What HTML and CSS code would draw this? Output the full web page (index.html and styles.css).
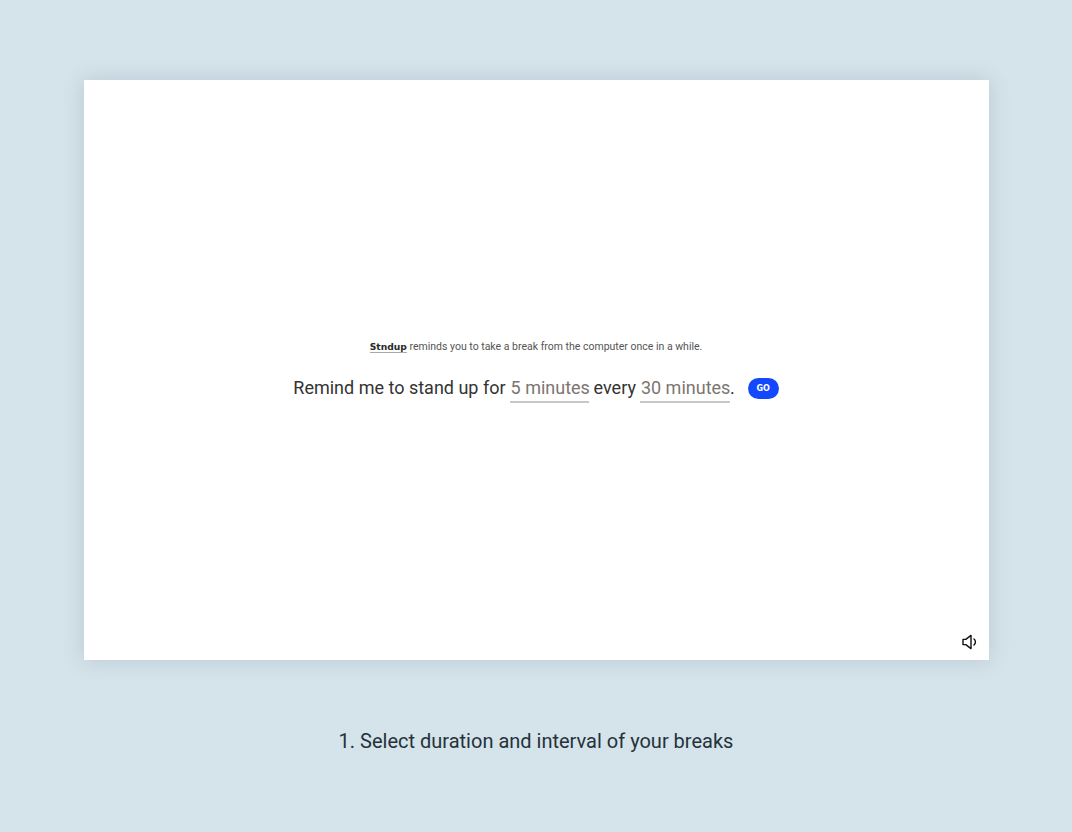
FILE: index.html
```html
<!DOCTYPE html>
<html lang="en">
<head>
    <meta charset="UTF-8">
    <meta name="viewport" content="width=device-width, initial-scale=1.0">
    <title>Stndup</title>
    <link rel="stylesheet" href="styles.css">
</head>
<body>
    <div class="screen">
        <div class="intro">
            <p class="tagline"><span class="brand">Stndup</span> reminds you to take a break from the computer once in a while.</p>
            <div class="sentence">
                <span>Remind me to stand up for</span>
                <span class="field field-duration">5 minutes</span>
                <span class="word">every</span>
                <span class="field field-interval">30 minutes</span><span class="dot">.</span>
                <button class="go" type="button">GO</button>
            </div>
        </div>
        <div class="sound">
            <svg width="16" height="16" viewBox="0 0 16 16" fill="none" stroke="#111" stroke-width="1.4" stroke-linejoin="round" stroke-linecap="round">
                <path d="M1 5.4h2.8L9 1.4v13.2l-5.2-4H1z"/>
                <path d="M12 5c1.9 1.6 1.9 4.4 0 6"/>
            </svg>
        </div>
    </div>
    <p class="caption">1. Select duration and interval of your breaks</p>
</body>
</html>
```

FILE: styles.css
```css
body {
    margin: 0;
    height: 832px;
    overflow: hidden;
    background-color: #d5e3ea;
    font-family: Roboto, "Liberation Sans", sans-serif;
    display: flex;
    flex-direction: column;
    align-items: center;
    padding-top: 80px;
    box-sizing: border-box;
}
.screen {
    position: relative;
    width: 905px;
    height: 580px;
    background-color: #fff;
    box-shadow: 0 0 20px rgba(70, 100, 125, 0.2);
    display: flex;
    align-items: center;
    justify-content: center;
}
.intro {
    display: flex;
    flex-direction: column;
    align-items: center;
    margin-top: 3px;
}
.tagline {
    margin: 0 0 20px;
    font-size: 10.5px;
    line-height: 14px;
    color: #555;
    white-space: nowrap;
}
.brand {
    font-family: "DejaVu Sans", sans-serif;
    font-weight: bold;
    font-size: 9.2px;
    color: #2a2a2a;
    border-bottom: 1px solid #aaa;
}
.sentence {
    display: flex;
    align-items: flex-start;
    gap: 4px;
    font-size: 18px;
    line-height: 28px;
    color: #333;
    white-space: nowrap;
}
.word {
    margin-left: 1px;
}
.field {
    color: #7c7570;
    border-bottom: 2px solid #c8c8c8;
    padding: 0 1px;
    box-sizing: border-box;
    height: 29px;
}
.field-duration {
    width: 79px;
}
.field-interval {
    width: 90px;
}
.dot {
    margin-left: -4px;
}
.go {
    width: 31px;
    height: 21px;
    margin: 4px 0 0 9px;
    padding: 0;
    border: none;
    border-radius: 11px;
    background-color: #1448ff;
    color: #fff;
    font-family: "DejaVu Sans", sans-serif;
    font-weight: bold;
    font-size: 8px;
}
.sound {
    position: absolute;
    right: 11px;
    bottom: 10px;
    line-height: 0;
}
.caption {
    margin: 69px 0 0;
    font-size: 20px;
    line-height: 24px;
    color: #25323a;
}
```
